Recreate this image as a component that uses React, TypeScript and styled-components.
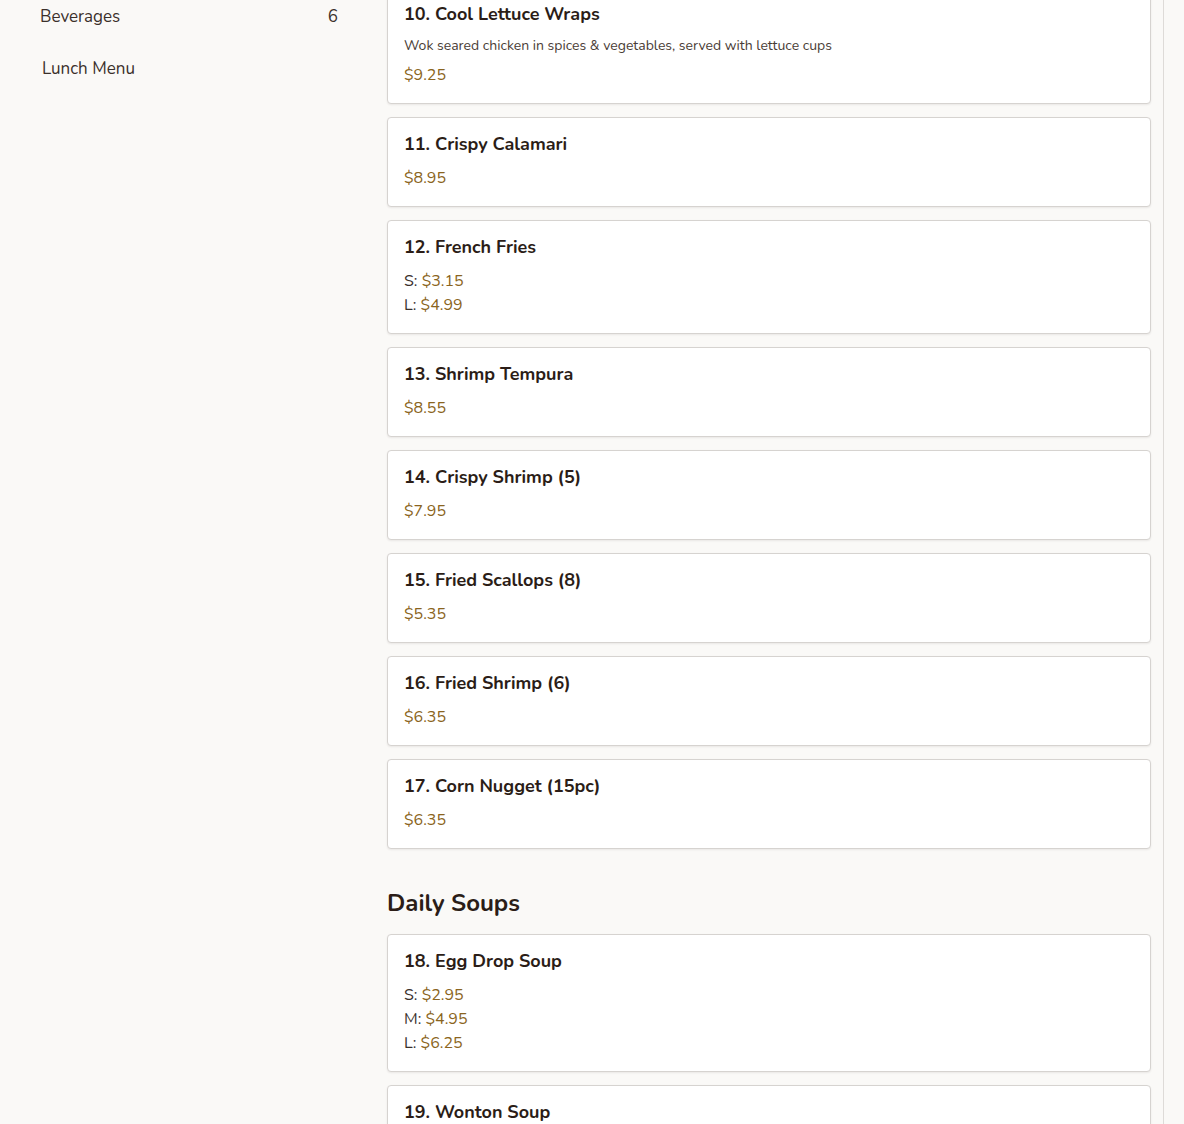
import React from "react";
import styled, { createGlobalStyle } from "styled-components";

const GlobalStyle = createGlobalStyle`
  html, body {
    margin: 0;
    padding: 0;
    background-color: #faf9f7;
    font-family: "Nunito", "Lato", "Noto Sans", sans-serif;
    color: #2b1f1a;
    overflow: hidden;
  }
`;

const Page = styled.div`
  display: grid;
  grid-template-columns: 387px 777px;
  height: 1124px;
  overflow: hidden;
`;

const Sidebar = styled.nav`
  display: flex;
  flex-direction: column;
  padding: 4px 32px 0 40px;
  gap: 28px;
`;

const NavRow = styled.div<{ $indent?: number }>`
  display: flex;
  justify-content: space-between;
  align-items: center;
  height: 24px;
  padding-left: ${(p) => p.$indent || 0}px;
  font-size: 17px;
  color: #3a302b;
  width: 298px;
  box-sizing: border-box;
`;

const Main = styled.main`
  display: flex;
  flex-direction: column;
  margin-top: -13px;
  padding-right: 12px;
  border-right: 1px solid #dedbd8;
`;

const CardList = styled.div`
  display: flex;
  flex-direction: column;
  gap: 13px;
`;

const Card = styled.div`
  background-color: #ffffff;
  border: 1px solid #d6d3d0;
  border-radius: 4px;
  box-shadow: 0 1px 2px rgba(40, 30, 20, 0.08);
  padding: 16px;
  display: flex;
  flex-direction: column;
`;

const Title = styled.div`
  font-size: 18px;
  font-weight: 700;
  line-height: 20px;
  color: #2b1d17;
  margin-bottom: 12px;
`;

const Description = styled.div`
  font-size: 14px;
  line-height: 20px;
  color: #4a3d36;
  margin-bottom: 7px;
`;

const PriceLine = styled.div`
  font-size: 16px;
  line-height: 24px;
  color: #3a302b;
`;

const Price = styled.span`
  color: #8a6420;
`;

const SectionTitle = styled.h2`
  font-size: 24px;
  font-weight: 700;
  line-height: 32px;
  margin: 38px 0 15px;
  color: #2b1d17;
`;

type Item = {
  name: string;
  desc?: string;
  prices: { size?: string; value: string }[];
};

const appetizers: Item[] = [
  {
    name: "10. Cool Lettuce Wraps",
    desc: "Wok seared chicken in spices & vegetables, served with lettuce cups",
    prices: [{ value: "$9.25" }],
  },
  { name: "11. Crispy Calamari", prices: [{ value: "$8.95" }] },
  {
    name: "12. French Fries",
    prices: [
      { size: "S", value: "$3.15" },
      { size: "L", value: "$4.99" },
    ],
  },
  { name: "13. Shrimp Tempura", prices: [{ value: "$8.55" }] },
  { name: "14. Crispy Shrimp (5)", prices: [{ value: "$7.95" }] },
  { name: "15. Fried Scallops (8)", prices: [{ value: "$5.35" }] },
  { name: "16. Fried Shrimp (6)", prices: [{ value: "$6.35" }] },
  { name: "17. Corn Nugget (15pc)", prices: [{ value: "$6.35" }] },
];

const soups: Item[] = [
  {
    name: "18. Egg Drop Soup",
    prices: [
      { size: "S", value: "$2.95" },
      { size: "M", value: "$4.95" },
      { size: "L", value: "$6.25" },
    ],
  },
  {
    name: "19. Wonton Soup",
    prices: [
      { size: "S", value: "$2.95" },
      { size: "M", value: "$4.95" },
      { size: "L", value: "$6.25" },
    ],
  },
];

const MenuCard = ({ item }: { item: Item }) => (
  <Card>
    <Title>{item.name}</Title>
    {item.desc && <Description>{item.desc}</Description>}
    {item.prices.map((p, i) => (
      <PriceLine key={i}>
        {p.size && <>{p.size}: </>}
        <Price>{p.value}</Price>
      </PriceLine>
    ))}
  </Card>
);

const App = () => {
  return (
    <>
      <GlobalStyle />
      <Page>
        <Sidebar>
          <NavRow>
            <span>Beverages</span>
            <span>6</span>
          </NavRow>
          <NavRow $indent={2}>
            <span>Lunch Menu</span>
          </NavRow>
        </Sidebar>
        <Main>
          <CardList>
            {appetizers.map((item) => (
              <MenuCard key={item.name} item={item} />
            ))}
          </CardList>
          <SectionTitle>Daily Soups</SectionTitle>
          <CardList>
            {soups.map((item) => (
              <MenuCard key={item.name} item={item} />
            ))}
          </CardList>
        </Main>
      </Page>
    </>
  );
};

export default App;
